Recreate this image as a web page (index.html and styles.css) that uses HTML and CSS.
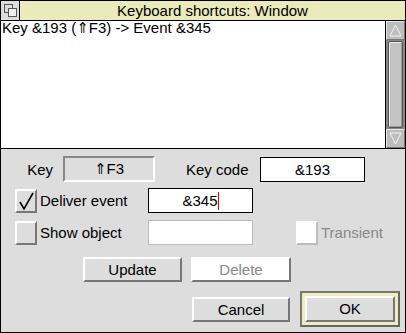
FILE: index.html
```html
<!DOCTYPE html>
<html lang="en">
  <head>
    <meta charset="UTF-8" />
    <title>Keyboard shortcuts: Window</title>
    <link rel="stylesheet" href="styles.css">
  </head>
  <body>
    <div class="window">
      <div class="titlebar">
        <div class="back-icon">
          <svg width="18" height="19" viewBox="0 0 18 19">
            <rect x="3.5" y="3.5" width="8" height="8" fill="none" stroke="#555" />
            <rect x="7.5" y="7.5" width="8" height="8" fill="#eee" stroke="#555" />
          </svg>
        </div>
        <div class="title">Keyboard shortcuts: Window</div>
      </div>
      <div class="work">
        <div class="list">Key &amp;193 (⇑F3) -&gt; Event &amp;345</div>
        <div class="scrollbar">
          <div class="arrow">
            <svg width="15" height="15" viewBox="0 0 15 15">
              <path d="M7.5 2 L13 13 L2 13 Z" fill="none" stroke="#f4f4f4" />
            </svg>
          </div>
          <div class="well"><div class="slider"></div></div>
          <div class="arrow">
            <svg width="15" height="15" viewBox="0 0 15 15">
              <path d="M2 2 L13 2 L7.5 13 Z" fill="none" stroke="#f4f4f4" />
            </svg>
          </div>
        </div>
      </div>
      <div class="pane">
        <div class="row row-key">
          <span class="label-key">Key</span>
          <div class="display">⇑F3</div>
          <span class="label-code">Key code</span>
          <div class="writable">&amp;193</div>
        </div>
        <div class="row row-option">
          <div class="checkbox">
            <svg width="18" height="20" viewBox="0 0 18 20">
              <path d="M3 11 L7 18 L16 2" fill="none" stroke="#000" stroke-width="1.6" />
            </svg>
          </div>
          <span class="label-option">Deliver event</span>
          <div class="writable">&amp;345<span class="caret"></span></div>
        </div>
        <div class="row row-option">
          <div class="checkbox"></div>
          <span class="label-option">Show object</span>
          <div class="writable greyed"></div>
          <div class="checkbox greyed transient"></div>
          <span class="label-transient">Transient</span>
        </div>
        <div class="row row-actions">
          <div class="button update">Update</div>
          <div class="button greyed delete">Delete</div>
        </div>
        <div class="row row-confirm">
          <div class="button cancel">Cancel</div>
          <div class="default">
            <div class="button ok">OK</div>
          </div>
        </div>
      </div>
    </div>
  </body>
</html>
```

FILE: styles.css
```css
* {
  box-sizing: border-box;
  margin: 0;
}
body {
  margin: 0;
  font-family: "Liberation Sans", Arial, "DejaVu Sans", sans-serif;
  font-size: 15px;
  color: #000;
  background: #fff;
}
.window {
  width: 406px;
  height: 333px;
  border: 1px solid #000;
  display: flex;
  flex-direction: column;
}
.titlebar {
  height: 20px;
  display: flex;
  border-bottom: 1px solid #000;
  flex-shrink: 0;
}
.back-icon {
  width: 19px;
  border-right: 1px solid #000;
  background: #ddd;
}
.back-icon svg {
  display: block;
}
.title {
  flex: 1;
  background: #ebeabb;
  text-align: center;
  line-height: 19px;
}
.work {
  height: 128px;
  display: flex;
  border-bottom: 1px solid #000;
  flex-shrink: 0;
}
.list {
  flex: 1;
  background: #fff;
  line-height: 14px;
  padding-left: 1px;
}
.scrollbar {
  width: 20px;
  border-left: 1px solid #000;
  display: flex;
  flex-direction: column;
  background: #888;
}
.arrow {
  height: 19px;
  background: #bdbdbd;
  border-top: 1px solid #e8e8e8;
  border-left: 1px solid #e8e8e8;
  border-bottom: 1px solid #777;
  border-right: 1px solid #777;
  display: flex;
  align-items: center;
  justify-content: center;
}
.well {
  flex: 1;
  padding: 1px 2px;
  background: #888;
}
.slider {
  height: 100%;
  background: #c4c4c4;
  border: 1px solid #555;
  border-radius: 2px;
  box-shadow: inset 1px 1px 0 #eee, inset -1px -1px 0 #999;
}
.pane {
  flex: 1;
  background: #ddd;
  padding: 7px 0 4px;
  display: flex;
  flex-direction: column;
}
.row {
  display: flex;
  align-items: center;
  flex-shrink: 0;
}
.row-key {
  height: 26px;
}
.label-key {
  width: 52px;
  text-align: right;
  margin-right: 10px;
}
.display {
  width: 92px;
  height: 26px;
  line-height: 22px;
  text-align: center;
  background: #ddd;
  border: 2px solid #fff;
  border-top-color: #888;
  border-left-color: #888;
}
.label-code {
  margin-left: 31px;
  width: 74px;
}
.writable {
  width: 105px;
  height: 25px;
  line-height: 23px;
  text-align: center;
  background: #fff;
  border: 1px solid #000;
}
.writable.greyed {
  border-color: #bbb;
}
.caret {
  display: inline-block;
  width: 1px;
  height: 18px;
  background: #e00;
  vertical-align: -4px;
}
.row-option {
  height: 25px;
  margin-top: 6px;
}
.row-option + .row-option {
  margin-top: 7px;
}
.checkbox {
  width: 22px;
  height: 24px;
  margin-left: 14px;
  background: #ddd;
  border: 2px solid #777;
  border-top-color: #fff;
  border-left-color: #fff;
}
.checkbox svg {
  display: block;
}
.checkbox.greyed {
  background: #fff;
  border-color: #bbb;
  border-top-color: #fff;
  border-left-color: #fff;
}
.transient {
  margin-left: 43px;
}
.label-option {
  margin-left: 3px;
  width: 108px;
}
.label-transient {
  margin-left: 3px;
  color: #888;
}
.button {
  height: 25px;
  line-height: 21px;
  text-align: center;
  background: #ddd;
  border: 2px solid #777;
  border-top-color: #fff;
  border-left-color: #fff;
}
.button.greyed {
  background: #fff;
  color: #888;
}
.row-actions {
  height: 25px;
  margin-top: 12px;
}
.update {
  width: 99px;
  margin-left: 82px;
}
.delete {
  width: 100px;
  margin-left: 9px;
}
.row-confirm {
  height: 36px;
  margin-top: 9px;
}
.cancel {
  width: 98px;
  margin-left: 191px;
}
.default {
  width: 100px;
  height: 36px;
  margin-left: 10px;
  padding: 3px;
  background: #eeeebb;
  border: 2px solid #666;
  border-top-color: #777;
  border-left-color: #777;
}
.ok {
  height: 26px;
}
```
